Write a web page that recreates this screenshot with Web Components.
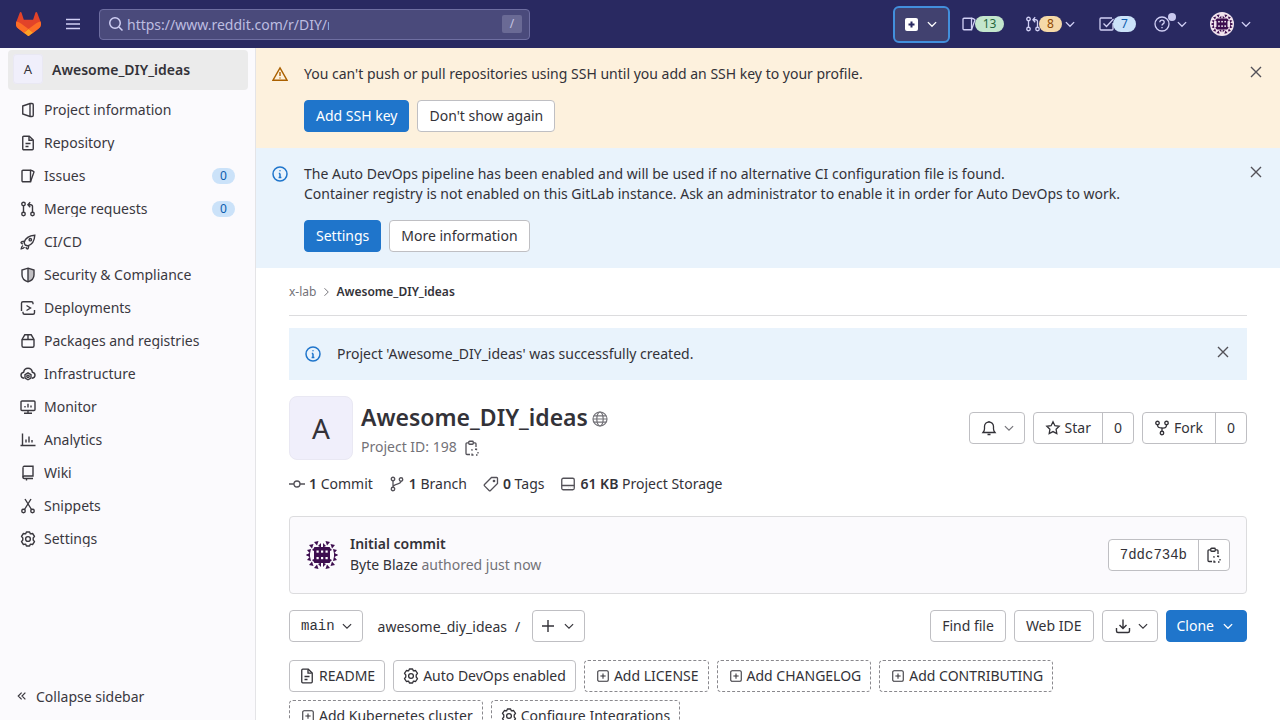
<!DOCTYPE html>
<html lang="en">
<head>
<meta charset="utf-8">
<title>Awesome_DIY_ideas</title>
<style>
  html, body { margin: 0; height: 100%; overflow: hidden; }
  body { font-family: "Noto Sans", sans-serif; font-size: 14px; color: #333238; background: #fff; }
</style>
</head>
<body>
<gl-app></gl-app>
<script>
  const GEAR = '<path stroke-linejoin="round" d="M6.4 1H9.600L10.400 2.900L12.600 2.500L14.500 5.400L13.200 7V9L14.500 10.600L12.600 13.500L10.400 13.100L9.600 15H6.400L5.600 13.100L3.400 13.500L1.500 10.600L2.800 9V7L1.500 5.400L3.400 2.500L5.600 2.900Z"/><circle cx="8" cy="8" r="2.400"/>';
  const ICONS = {
    search: '<circle cx="7" cy="7" r="5.25"/><path d="M11 11l3.5 3.5"/>',
    menu: '<path d="M1 3.5h14M1 8h14M1 12.5h14"/>',
    chevron: '<path d="M2.500 5.500L8 11l5.500-5.500"/>',
    right: '<path d="M6 3l5 5-5 5"/>',
    close: '<path d="M3 3l10 10M13 3L3 13"/>',
    warning: '<path d="M8 1.8L15 14.2H1z"/><path d="M8 6v4M8 11.5v1"/>',
    info: '<circle cx="8" cy="8" r="7"/><path d="M8 7.5v4M6.8 7.5H8M6.6 11.5h2.8M8 4.2v1"/>',
    project: '<path d="M2.750 4L10 1.500h2a1.250 1.250 0 0 1 1.250 1.250v10.500A1.250 1.250 0 0 1 12 14.500h-2L2.750 12z"/><path d="M10 1.500v13"/>',
    doc: '<path d="M2.750 2.200c0-.5.400-1 1-1h5.500L13.250 5v8.800c0 .5-.5 1-1 1h-8.500c-.6 0-1-.5-1-1z"/><path d="M9 1.400v3.800h3.800M5.500 8.500h5M5.500 11.500h3"/>',
    issues: '<path d="M3 2.250h7.500v11.500H3a1 1 0 0 1-1-1V3.250a1 1 0 0 1 1-1z"/><path d="M10.500 2.250c1.200.2 3 1 3.500 1.700L10.500 13.750"/>',
    merge: '<circle cx="3.500" cy="3" r="1.750"/><circle cx="3.500" cy="13" r="1.750"/><circle cx="12.500" cy="13" r="1.750"/><path d="M3.500 4.750v6.500M12.500 11.250V5.500A1.750 1.750 0 0 0 10.750 3.750H8.500M10.200 1.200L7.900 3.750l2.300 2.500"/>',
    rocket: '<path d="M5.200 11c-.6-1-.9-1.900-1-2.700C5.400 4 9.500 1.500 14.800 1.200c-.3 5.300-2.800 9.400-7.100 10.600-.8-.1-1.700-.4-2.500-.8z"/><circle cx="10.300" cy="5.700" r="1.200"/><path d="M4.500 7.200L1.600 7.800C1 8 .9 8.700 1.300 9.100l1.400 1.200M8.800 11.500l-.6 2.900c-.2.600-.9.700-1.300.3l-1.200-1.400M3 11.500C1.800 12.200 1.400 13.400 1.200 14.800c1.400-.2 2.600-.6 3.300-1.800"/>',
    shield: '<path d="M8 1.200L14 3v5c0 3.300-2.700 5.700-6 6.800C4.700 13.700 2 11.300 2 8V3z"/><path d="M8 1.500v13"/><path fill="currentColor" fill-opacity=".3" stroke="none" d="M8 1.500L14 3v5c0 3.300-2.700 5.700-6 6.800z"/>',
    deploy: '<path d="M1.500 6V3.200c0-.9.700-1.500 1.500-1.500h8.500c.9 0 1.500.7 1.500 1.500v1M14.500 10v2.800c0 .9-.7 1.500-1.500 1.500H4.500c-.9 0-1.500-.7-1.500-1.500v-1"/><path d="M6.500 5.500L10.500 8l-4 2.500M1.500 6v5"/>',
    pack: '<path d="M2 6.500L4.800 1.800h6.400L14 6.500v6.200c0 .9-.7 1.500-1.500 1.500h-9c-.9 0-1.500-.7-1.500-1.500z"/><path d="M2 6.500h12M8 1.800v4.700"/>',
    infra: '<path d="M4 12.300C2 11.800 1 10.500 1 9.200c0-1.600 1.200-2.700 2.600-2.900C4 3.800 5.900 2.300 8 2.300s4 1.500 4.400 4c1.400.2 2.600 1.300 2.600 2.900 0 1.300-1 2.600-3 3.100"/><path d="M8 6.800l3 1.800v3.400l-3 1.800-3-1.800V8.600z"/><circle cx="8" cy="10.300" r="1.200"/>',
    monitor: '<rect x="1" y="2" width="14" height="9.500" rx="1"/><path d="M8 11.500V14M4 14.300h8M5 8.500V7M8 8.500V4.800M11 8.500V6.500"/>',
    chart: '<path d="M2.500 1.500v12.500M.5 13.500h15M6 10.500V7.500M9 10.500V4.500M12 10.500V8"/>',
    book: '<path d="M3 2.500c0-.7.600-1.200 1.200-1.200H13v9.700H4.200C3.500 11 3 11.500 3 12.200s.5 1.300 1.200 1.300H13"/><path d="M3 2.500v10M6.500 13.500v2"/>',
    scissors: '<circle cx="3.500" cy="13" r="1.750"/><circle cx="12.500" cy="13" r="1.750"/><path d="M4.500 11.500L11 1M11.500 11.500L5 1"/>',
    gear: GEAR,
    collapse: '<path d="M7.500 3.500L3 8l4.500 4.500M12.500 3.500L8 8l4.500 4.500"/>',
    globe: '<circle cx="8" cy="8" r="7"/><path d="M1 8h14M1.800 4.800h12.400M1.800 11.200h12.400"/><ellipse cx="8" cy="8" rx="3.200" ry="7"/>',
    copy: '<path d="M5.500 2.800H4c-.6 0-1 .4-1 1v9.700c0 .6.400 1 1 1h3M10.500 2.800H12c.6 0 1 .4 1 1V7"/><rect x="5.750" y="1.250" width="4.500" height="3" rx=".8"/><path d="M9.500 9.750h-.5v1M12 9.250h1.500v1M15 12v1.500M14.500 15H13M10.500 15H9v-1.500"/>',
    commit: '<circle cx="8" cy="8" r="3"/><path d="M0 8h5M11 8h5"/>',
    branch: '<circle cx="4" cy="3" r="1.750"/><circle cx="4" cy="13" r="1.750"/><circle cx="12" cy="3.500" r="1.750"/><path d="M4 4.750v6.500M12 5.250c0 3.500-8 2-8 6"/>',
    tag: '<path d="M14.500 2.300c0-.5-.400-.800-.800-.800H8.500L1.500 8.500c-.4.400-.4 1 0 1.400l4.600 4.600c.4.400 1 .4 1.400 0l7-7z"/><circle cx="11" cy="5" r=".7"/>',
    storage: '<rect x="1.750" y="2.250" width="12.500" height="11.500" rx="1.500"/><path d="M1.750 9.500h12.500M10 11.700h.1M12 11.700h.1M8 11.700h.1"/>',
    bell: '<path d="M2 12.500h12c-1-1.200-1.500-2-1.500-3.500V6.500a4.500 4.500 0 0 0-9 0V9c0 1.500-.5 2.300-1.500 3.500zM6.500 14.500h3M8 2V1"/>',
    star: '<path d="M8 1.800l1.900 3.900 4.300.6-3.100 3 .7 4.300L8 11.600l-3.800 2 .7-4.300-3.100-3 4.300-.6z"/>',
    fork: '<circle cx="3.500" cy="3" r="1.750"/><circle cx="12.500" cy="3" r="1.750"/><circle cx="8" cy="13" r="1.750"/><path d="M3.500 4.750c0 2.500 1 3 4.500 3.250s4.500-.75 4.500-3.250M8 8v3.250"/>',
    plus: '<path d="M8 2v12M2 8h12"/>',
    download: '<path d="M8 1.500v8.500M4.500 7L8 10.500 11.500 7M1.500 10v3c0 .8.700 1.500 1.500 1.500h10c.8 0 1.500-.700 1.500-1.500v-3"/>',
    plussquare: '<rect x="2" y="2" width="12" height="12" rx="1.500"/><path d="M8 5v6M5 8h6"/>',
    help: '<circle cx="8" cy="8" r="7"/><path d="M5.800 6.200C5.900 5 6.800 4.200 8 4.200s2.200.8 2.200 2c0 1.700-2.200 1.600-2.200 3.300M8 11v1.200"/>',
    todo: '<path d="M14 7v6c0 .6-.4 1-1 1H2c-.6 0-1-.4-1-1V3c0-.6.4-1 1-1h11"/><path d="M4.500 7.500l3 3L14.500 3"/>'
  };

  class GlIcon extends HTMLElement {
    connectedCallback() {
      const name = this.getAttribute("name");
      const size = this.getAttribute("size") || 16;
      const stroke = this.getAttribute("stroke") || 1.5;
      this.attachShadow({ mode: "open" }).innerHTML = `
        <style>
          :host { display: inline-flex; flex: none; width: ${size}px; height: ${size}px; }
          svg { display: block; fill: none; stroke: currentColor; stroke-width: ${stroke}; }
        </style>
        <svg width="${size}" height="${size}" viewBox="0 0 16 16">${ICONS[name]}</svg>`;
    }
  }

  class GlIdenticon extends HTMLElement {
    connectedCallback() {
      const size = this.getAttribute("size") || 32;
      const c = this.getAttribute("color") || "#3d0e4f";
      let marks = "";
      // a quarter of the ring of triangles, mirrored to the other three
      const tris = ["8,3 12.500,2 11,6.500", "3,6 7.500,5 6,9.500", "1,11 5,10 4,14.500", "0,16 4,14 4,18", "6,11 9,8 9,12.500", "12,7 15,4 15,8.500"];
      for (const t of tris) {
        for (const m of ["", "translate(32 0) scale(-1 1)", "translate(0 32) scale(1 -1)", "translate(32 32) scale(-1 -1)"]) {
          marks += `<polygon points="${t}" transform="${m}"/>`;
        }
      }
      this.attachShadow({ mode: "open" }).innerHTML = `
        <style>:host { display: inline-flex; flex: none; width: ${size}px; height: ${size}px; }</style>
        <svg width="${size}" height="${size}" viewBox="0 0 32 32" fill="${c}">
          ${marks}
          <rect x="8" y="8" width="16" height="16" rx="1"/>
          <g fill="#fff"><rect x="10.500" y="11.500" width="2.200" height="2.200"/><rect x="15" y="11.500" width="2.200" height="2.200"/><rect x="19.500" y="11.500" width="2.200" height="2.200"/><rect x="10.500" y="18" width="2.200" height="2.200"/><rect x="15" y="18" width="2.200" height="2.200"/><rect x="19.500" y="18" width="2.200" height="2.200"/></g>
        </svg>`;
    }
  }

  class GlButton extends HTMLElement {
    constructor() {
      super();
      this.attachShadow({ mode: "open" }).innerHTML = `
        <style>
          :host {
            display: inline-flex; align-items: center; justify-content: center; gap: 4px;
            box-sizing: border-box; height: 32px; padding: 0 11px; flex: none;
            background: #fff; color: #333238; border: 1px solid #bfbfc3; border-radius: 4px;
            font-size: 14px; line-height: 20px; white-space: nowrap;
          }
          :host([variant="confirm"]) { background: #1f75cb; border-color: #1f75cb; color: #fff; }
          :host([variant="dashed"]) { background: transparent; border: 1px dashed #89888d; padding: 0 9px 0 11px; }
          :host([variant="soft"]) { padding: 0 9px; }
        </style>
        <slot></slot>`;
    }
  }

  // two buttons sharing a border, the Star | 0 kind
  class GlButtonGroup extends HTMLElement {
    constructor() {
      super();
      this.attachShadow({ mode: "open" }).innerHTML = `
        <style>
          :host { display: inline-flex; height: 32px; box-sizing: border-box; border: 1px solid #bfbfc3; border-radius: 4px; background: #fff; }
          ::slotted(span) { display: inline-flex; align-items: center; justify-content: center; gap: 4px; padding: 0 11px; white-space: nowrap; }
          ::slotted(span:last-child) { border-left: 1px solid #bfbfc3; }
        </style>
        <slot></slot>`;
    }
  }

  class GlAlert extends HTMLElement {
    constructor() {
      super();
      this.attachShadow({ mode: "open" }).innerHTML = `
        <style>
          :host { display: flex; background: #e9f3fc; padding: 16px; line-height: 20px; color: #333238; }
          :host([variant="warning"]) { background: #fdf1dd; }
          .icon { margin-right: 16px; padding-top: 2px; height: 16px; }
          .body { flex: 1; min-width: 0; }
          .close { color: #535158; height: 16px; }
          .actions { display: flex; gap: 8px; margin-top: 16px; }
          .actions.empty { display: none; }
          :host([variant="warning"]) .icon { color: #ab6100; }
          :host([variant="info"]) .icon { color: #1f75cb; }
        </style>
        <div class="icon"><slot name="icon"></slot></div>
        <div class="body">
          <slot></slot>
          <div class="actions"><slot name="actions"></slot></div>
        </div>
        <div class="close"><gl-icon name="close" stroke="1.4"></gl-icon></div>`;
    }
    connectedCallback() {
      if (!this.querySelector('[slot="actions"]')) this.shadowRoot.querySelector(".actions").classList.add("empty");
    }
  }

  class GlNavItem extends HTMLElement {
    connectedCallback() {
      const count = this.getAttribute("count");
      this.attachShadow({ mode: "open" }).innerHTML = `
        <style>
          :host { display: flex; align-items: center; height: 33px; margin: 0 8px; padding: 0 12px; color: #3a383f; }
          gl-icon { margin-right: 8px; }
          .label { flex: 1; line-height: 16px; height: 16px; overflow: hidden; white-space: nowrap; }
          .count { width: 23px; height: 16px; border-radius: 8px; background: #cbe2f9; color: #0b5cad; font-size: 12px; line-height: 16px; text-align: center; }
        </style>
        <gl-icon name="${this.getAttribute("icon")}" stroke="1.4"></gl-icon>
        <span class="label"><slot></slot></span>
        ${count !== null ? `<span class="count">${count}</span>` : ""}`;
    }
  }

  class GlSidebar extends HTMLElement {
    constructor() {
      super();
      this.attachShadow({ mode: "open" }).innerHTML = `
        <style>
          :host { display: flex; flex-direction: column; flex: none; box-sizing: border-box; width: 256px; height: 100%; background: #fbfafd; border-right: 1px solid #e4e4e7; }
          .context { display: flex; align-items: center; box-sizing: border-box; height: 40px; margin: 2px 7px 3px 8px; padding: 0 0 2px 5px; background: #ebebeb; border-radius: 4px; font-weight: 600; }
          .avatar { display: flex; align-items: center; justify-content: center; width: 30px; height: 30px; margin-right: 9px; background: #f0effb; border-radius: 4px; font-weight: 400; font-size: 13px; box-shadow: inset 0 0 0 1px #e9e8f3; }
          .list { display: flex; flex-direction: column; }
          .collapse { display: flex; align-items: center; margin-top: auto; height: 48px; padding-left: 16px; gap: 8px; color: #3a383f; }
          gl-icon { width: 12px; }
        </style>
        <div class="context"><span class="avatar">A</span>Awesome_DIY_ideas</div>
        <div class="list">
          <gl-nav-item icon="project">Project information</gl-nav-item>
          <gl-nav-item icon="doc">Repository</gl-nav-item>
          <gl-nav-item icon="issues" count="0">Issues</gl-nav-item>
          <gl-nav-item icon="merge" count="0">Merge requests</gl-nav-item>
          <gl-nav-item icon="rocket">CI/CD</gl-nav-item>
          <gl-nav-item icon="shield">Security &amp; Compliance</gl-nav-item>
          <gl-nav-item icon="deploy">Deployments</gl-nav-item>
          <gl-nav-item icon="pack">Packages and registries</gl-nav-item>
          <gl-nav-item icon="infra">Infrastructure</gl-nav-item>
          <gl-nav-item icon="monitor">Monitor</gl-nav-item>
          <gl-nav-item icon="chart">Analytics</gl-nav-item>
          <gl-nav-item icon="book">Wiki</gl-nav-item>
          <gl-nav-item icon="scissors">Snippets</gl-nav-item>
          <gl-nav-item icon="gear">Settings</gl-nav-item>
        </div>
        <div class="collapse"><gl-icon name="collapse" size="12" stroke="1.6"></gl-icon><span>Collapse sidebar</span></div>`;
    }
  }

  class GlNavbar extends HTMLElement {
    constructor() {
      super();
      this.attachShadow({ mode: "open" }).innerHTML = `
        <style>
          :host { display: flex; align-items: center; flex: none; height: 48px; background: #292961; color: #d1d0f5; padding: 0 28px 0 16px; box-sizing: border-box; }
          .logo { display: block; margin-right: 24px; }
          .menu { margin-right: 18px; color: #d1d0f5; }
          .search { display: flex; align-items: center; box-sizing: border-box; width: 431px; height: 31px; padding: 0 7px 0 8px; background: #4a4a7b; border: 1px solid #6e6ea1; border-radius: 4px; color: #d1d0f5; }
          .search gl-icon { margin-right: 3px; }
          .query { width: 202px; overflow: hidden; white-space: nowrap; color: #bdbde0; }
          .slash { margin-left: auto; width: 20px; height: 18px; border-radius: 2px; background: #6a6a95; color: #c5c5e2; font-size: 12px; line-height: 18px; text-align: center; }
          .right { display: flex; align-items: center; margin-left: auto; }
          .new { display: flex; align-items: center; box-sizing: border-box; width: 57px; height: 37px; padding-left: 10px; gap: 8px; background: #41416f; border: 2px solid #428fdc; border-radius: 6px; color: #fff; margin-right: 11px; }
          .item { display: flex; align-items: center; }
          .badge { width: 23px; height: 16px; border-radius: 8px; margin-left: -2px; font-size: 12px; line-height: 16px; text-align: center; }
          .green { width: 29px; background: #c3e6cd; color: #24663b; }
          .orange { background: #f5d9a8; color: #8f4700; }
          .blue { background: #cbe2f9; color: #0b5cad; }
          .chev { margin-left: 2px; }
          .help { position: relative; display: flex; }
          .dot { position: absolute; top: -3px; right: -6px; width: 8px; height: 8px; border-radius: 50%; background: #c9c9ef; }
          .me { width: 24px; height: 24px; border-radius: 50%; background: #f1e4ee; display: flex; align-items: center; justify-content: center; }
        </style>
        <svg class="logo" width="25" height="24" viewBox="0 0 25 24">
          <path fill="#E24329" d="m24.507 9.5-.034-.09L21.082.562a.896.896 0 0 0-1.694.091l-2.29 7.01H7.825L5.535.653a.898.898 0 0 0-1.694-.09L.451 9.411.416 9.5a6.297 6.297 0 0 0 2.09 7.278l.012.01.03.022 5.16 3.867 2.56 1.935 1.554 1.176a1.051 1.051 0 0 0 1.268 0l1.555-1.176 2.56-1.935 5.197-3.89.014-.01A6.297 6.297 0 0 0 24.507 9.5Z"/>
          <path fill="#FC6D26" d="m24.507 9.5-.034-.09a11.44 11.44 0 0 0-4.56 2.051l-7.447 5.632 4.742 3.584 5.197-3.89.014-.01A6.297 6.297 0 0 0 24.507 9.5Z"/>
          <path fill="#FCA326" d="m7.707 20.677 2.56 1.935 1.555 1.176a1.051 1.051 0 0 0 1.268 0l1.555-1.176 2.56-1.935-4.743-3.584-4.755 3.584Z"/>
          <path fill="#FC6D26" d="M5.01 11.461a11.43 11.43 0 0 0-4.56-2.05L.416 9.5a6.297 6.297 0 0 0 2.09 7.278l.012.01.03.022 5.16 3.867 4.745-3.584-7.444-5.632Z"/>
        </svg>
        <gl-icon class="menu" name="menu" stroke="1.5"></gl-icon>
        <div class="search">
          <gl-icon name="search"></gl-icon>
          <span class="query">https://www.reddit.com/r/DIY/new</span>
          <span class="slash">/</span>
        </div>
        <div class="right">
          <div class="new">
            <svg width="13" height="13" viewBox="0 0 13 13"><rect width="13" height="13" rx="2" fill="#fff"/><path d="M6.500 3.500v6M3.500 6.500h6" stroke="#292961" stroke-width="2"/></svg>
            <gl-icon name="chevron" size="12" stroke="1.800"></gl-icon>
          </div>
          <div class="item" style="margin-right:21px"><gl-icon name="issues" stroke="1.3"></gl-icon><span class="badge green">13</span></div>
          <div class="item" style="margin-right:23px"><gl-icon name="merge" stroke="1.3"></gl-icon><span class="badge orange">8</span><gl-icon class="chev" name="chevron" size="12" stroke="1.800"></gl-icon></div>
          <div class="item" style="margin-right:18px"><gl-icon name="todo" stroke="1.3"></gl-icon><span class="badge blue">7</span></div>
          <div class="item" style="margin-right:22px"><span class="help"><gl-icon name="help" stroke="1.3"></gl-icon><span class="dot"></span></span><gl-icon class="chev" name="chevron" size="12" stroke="1.800" style="margin-left:6px"></gl-icon></div>
          <div class="item"><span class="me"><gl-identicon size="22"></gl-identicon></span><gl-icon class="chev" name="chevron" size="12" stroke="1.800" style="margin-left:6px"></gl-icon></div>
        </div>`;
    }
  }

  class GlProject extends HTMLElement {
    constructor() {
      super();
      this.attachShadow({ mode: "open" }).innerHTML = `
        <style>
          :host { display: block; padding: 0 33px; line-height: 20px; }
          .crumbs { display: flex; align-items: center; height: 47px; border-bottom: 1px solid #dcdcde; font-size: 12px; color: #737278; }
          .crumbs gl-icon { margin: 0 4px 0 4px; }
          .crumbs b { color: #333238; font-weight: 600; }
          .flash { margin-top: 12px; }
          .head { display: flex; margin-top: 16px; height: 64px; }
          .avatar { display: flex; align-items: center; justify-content: center; box-sizing: border-box; width: 64px; height: 64px; margin-right: 8px; background: #f0effb; border: 1px solid #e9e8f3; border-radius: 8px; font-size: 28px; color: #333238; }
          .title { display: flex; align-items: center; gap: 4px; margin-top: 4px; font-size: 23px; line-height: 34px; font-weight: 600; color: #333238; }
          .title gl-icon { color: #737278; margin-top: 4px; }
          .id { display: flex; align-items: center; margin-top: 3px; color: #737278; }
          .id gl-icon { margin-left: 6px; color: #535158; margin-top: 2px; }
          .head-actions { display: flex; gap: 8px; margin-left: auto; margin-top: 16px; }
          .stats { display: flex; gap: 16px; height: 22px; margin-top: 13px; align-items: center; color: #333238; }
          .stats span { display: flex; align-items: center; white-space: pre; }
          .stats gl-icon { margin-right: 4px; color: #535158; }
          .stats b { font-weight: 600; }
          .commit { display: flex; align-items: center; box-sizing: border-box; height: 78px; margin-top: 21px; padding: 0 16px; background: #fbfafd; border: 1px solid #dcdcde; border-radius: 4px; }
          .commit gl-identicon { margin-right: 12px; }
          .commit .text { margin-top: -2px; }
          .commit .msg { font-weight: 600; }
          .commit .by { line-height: 21px; }
          .muted { color: #737278; }
          .sha { margin-left: auto; display: inline-flex; }
          .mono { font-family: "Liberation Mono", monospace; font-size: 14px; }
          .tree { display: flex; align-items: center; margin-top: 16px; height: 32px; }
          .path { margin: 1px 0 0 15px; }
          .slash { margin: 1px 12px 0 8px; }
          .tree-right { display: flex; gap: 8px; margin-left: auto; }
          .chip-row { display: flex; gap: 8px; margin-top: 18px; }
          .chip-row + .chip-row { margin-top: 8px; }
        </style>
        <div class="crumbs"><span>x-lab</span><gl-icon name="right" size="12" stroke="1.300"></gl-icon><b>Awesome_DIY_ideas</b></div>
        <gl-alert class="flash" variant="info"><gl-icon slot="icon" name="info"></gl-icon>Project 'Awesome_DIY_ideas' was successfully created.</gl-alert>
        <div class="head">
          <div class="avatar">A</div>
          <div>
            <div class="title">Awesome_DIY_ideas <gl-icon name="globe" stroke="1.2"></gl-icon></div>
            <div class="id">Project ID: 198 <gl-icon name="copy" stroke="1.3"></gl-icon></div>
          </div>
          <div class="head-actions">
            <gl-button variant="soft"><gl-icon name="bell" stroke="1.3" style="margin:0 2px"></gl-icon><gl-icon name="chevron" size="12" stroke="1.5" style="color:#737278"></gl-icon></gl-button>
            <gl-button-group><span><gl-icon name="star" stroke="1.3"></gl-icon>Star</span><span>0</span></gl-button-group>
            <gl-button-group><span style="padding:0 12px 0 11px"><gl-icon name="fork" stroke="1.3"></gl-icon>Fork</span><span>0</span></gl-button-group>
          </div>
        </div>
        <div class="stats">
          <span><gl-icon name="commit" stroke="1.3"></gl-icon><b>1</b> Commit</span>
          <span><gl-icon name="branch" stroke="1.3"></gl-icon><b>1</b> Branch</span>
          <span><gl-icon name="tag" stroke="1.3"></gl-icon><b>0</b> Tags</span>
          <span><gl-icon name="storage" stroke="1.3"></gl-icon><b>61 KB</b> Project Storage</span>
        </div>
        <div class="commit">
          <gl-identicon size="32"></gl-identicon>
          <div class="text">
            <div class="msg">Initial commit</div>
            <div class="by">Byte Blaze <span class="muted">authored just now</span></div>
          </div>
          <div class="sha"><gl-button-group><span class="mono">7ddc734b</span><span style="padding:0 8px 0 6px"><gl-icon name="copy" stroke="1.3"></gl-icon></span></gl-button-group></div>
        </div>
        <div class="tree">
          <gl-button style="padding:0 9px 0 11px;gap:6px"><span class="mono">main</span><gl-icon name="chevron" size="12" stroke="1.5"></gl-icon></gl-button>
          <span class="path">awesome_diy_ideas</span><span class="slash">/</span>
          <gl-button style="padding:0 9px 0 7px"><gl-icon name="plus" stroke="1.4"></gl-icon><gl-icon name="chevron" size="12" stroke="1.5" style="margin-left:3px"></gl-icon></gl-button>
          <div class="tree-right">
            <gl-button>Find file</gl-button>
            <gl-button>Web IDE</gl-button>
            <gl-button style="padding:0 8px 0 12px"><gl-icon name="download" stroke="1.4" style="margin-right:2px"></gl-icon><gl-icon name="chevron" size="12" stroke="1.5"></gl-icon></gl-button>
            <gl-button variant="confirm" style="padding:0 12px 0 10px;gap:8px">Clone<gl-icon name="chevron" size="12" stroke="1.800"></gl-icon></gl-button>
          </div>
        </div>
        <div class="chip-row">
          <gl-button style="padding:0 9px"><gl-icon name="doc" stroke="1.3"></gl-icon>README</gl-button>
          <gl-button style="padding:0 9px"><gl-icon name="gear" stroke="1.3"></gl-icon>Auto DevOps enabled</gl-button>
          <gl-button variant="dashed"><gl-icon name="plussquare" size="14" stroke="1.2"></gl-icon>Add LICENSE</gl-button>
          <gl-button variant="dashed"><gl-icon name="plussquare" size="14" stroke="1.2"></gl-icon>Add CHANGELOG</gl-button>
          <gl-button variant="dashed"><gl-icon name="plussquare" size="14" stroke="1.2"></gl-icon>Add CONTRIBUTING</gl-button>
        </div>
        <div class="chip-row">
          <gl-button variant="dashed"><gl-icon name="plussquare" size="14" stroke="1.2"></gl-icon>Add Kubernetes cluster</gl-button>
          <gl-button variant="dashed" style="padding:0 9px"><gl-icon name="gear" stroke="1.3"></gl-icon>Configure Integrations</gl-button>
        </div>`;
    }
  }

  class GlApp extends HTMLElement {
    constructor() {
      super();
      this.attachShadow({ mode: "open" }).innerHTML = `
        <style>
          :host { display: flex; flex-direction: column; height: 100vh; overflow: hidden; }
          .page { display: flex; flex: 1; min-height: 0; }
          main { flex: 1; min-width: 0; overflow: hidden; }
        </style>
        <gl-navbar></gl-navbar>
        <div class="page">
          <gl-sidebar></gl-sidebar>
          <main>
            <gl-alert variant="warning">
              <gl-icon slot="icon" name="warning" stroke="1.4"></gl-icon>
              You can't push or pull repositories using SSH until you add an SSH key to your profile.
              <gl-button slot="actions" variant="confirm">Add SSH key</gl-button>
              <gl-button slot="actions">Don't show again</gl-button>
            </gl-alert>
            <gl-alert variant="info">
              <gl-icon slot="icon" name="info"></gl-icon>
              The Auto DevOps pipeline has been enabled and will be used if no alternative CI configuration file is found.<br>
              Container registry is not enabled on this GitLab instance. Ask an administrator to enable it in order for Auto DevOps to work.
              <gl-button slot="actions" variant="confirm">Settings</gl-button>
              <gl-button slot="actions">More information</gl-button>
            </gl-alert>
            <gl-project></gl-project>
          </main>
        </div>`;
    }
  }

  customElements.define("gl-icon", GlIcon);
  customElements.define("gl-identicon", GlIdenticon);
  customElements.define("gl-button", GlButton);
  customElements.define("gl-button-group", GlButtonGroup);
  customElements.define("gl-alert", GlAlert);
  customElements.define("gl-nav-item", GlNavItem);
  customElements.define("gl-sidebar", GlSidebar);
  customElements.define("gl-navbar", GlNavbar);
  customElements.define("gl-project", GlProject);
  customElements.define("gl-app", GlApp);
</script>
</body>
</html>
